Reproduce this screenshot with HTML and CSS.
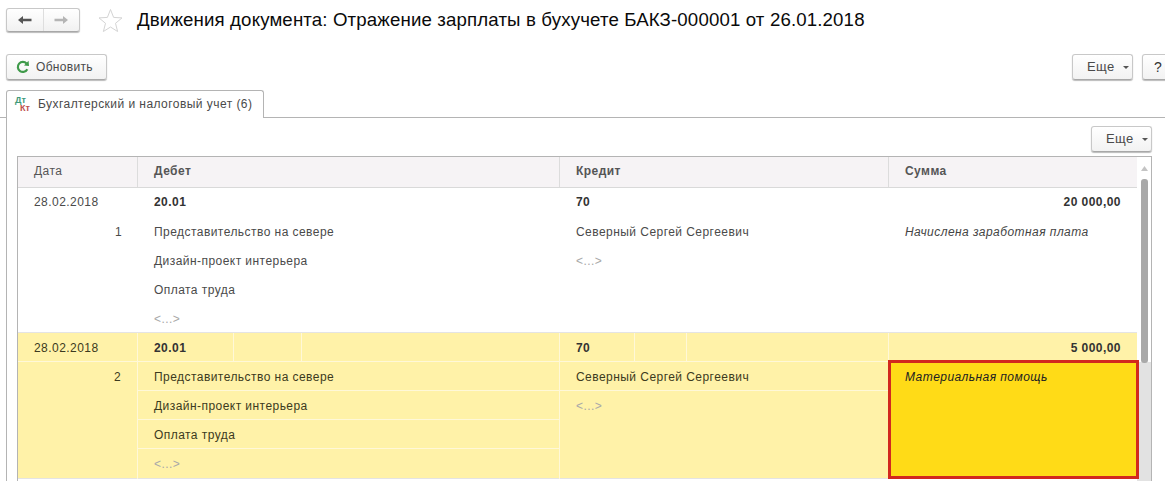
FILE: index.html
```html
<!DOCTYPE html>
<html lang="ru">
<head>
<meta charset="utf-8">
<title>Движения документа</title>
<link rel="stylesheet" href="styles.css">
</head>
<body>
<div class="page">
  <header class="top">
    <div class="nav">
      <span class="nav-btn">
        <svg width="14" height="10" viewBox="0 0 14 10"><path d="M0 5 L5 1 V3.8 H13.5 V6.2 H5 V9 Z" fill="#555"/></svg>
      </span>
      <span class="nav-btn">
        <svg width="14" height="10" viewBox="0 0 14 10"><path d="M14 5 L9 1 V3.8 H.5 V6.2 H9 V9 Z" fill="#b5b5b5"/></svg>
      </span>
    </div>
    <svg class="star" width="25" height="25" viewBox="0 0 25 25"><path d="M12.5 1.5 L15.6 9.4 L24 9.9 L17.5 15.3 L19.6 23.5 L12.5 19 L5.4 23.5 L7.5 15.3 L1 9.9 L9.4 9.4 Z" fill="#fff" stroke="#d4d4d4"/></svg>
    <h1 class="title">Движения документа: Отражение зарплаты в бухучете БАКЗ-000001 от 26.01.2018</h1>
  </header>

  <div class="cmd">
    <button class="btn refresh">
      <svg width="14" height="14" viewBox="0 0 14 14"><path d="M11.3 9.2 A5 5 0 1 1 10.6 3.6" fill="none" stroke="#3f9a4a" stroke-width="2.2"/><path d="M8 5.6 L13 6 L12.6 0.8 Z" fill="#3f9a4a"/></svg>
      <span>Обновить</span>
    </button>
    <div class="cmd-right">
      <button class="btn more">Еще <i class="caret"></i></button>
      <button class="btn help">?</button>
    </div>
  </div>

  <div class="tabs">
    <div class="tab">
      <span class="dtkt"><span class="dt">Дт</span><span class="kt">Кт</span></span>
      <span>Бухгалтерский и налоговый учет (6)</span>
    </div>
  </div>

  <section class="panel">
    <div class="panel-cmd">
      <button class="btn more">Еще <i class="caret"></i></button>
    </div>
    <div class="table">
      <div class="body">
        <div class="grid head">
          <div class="th">Дата</div>
          <div class="th b">Дебет</div>
          <div class="th b">Кредит</div>
          <div class="th b last">Сумма</div>
        </div>

        <div class="grid rec">
          <div class="date">
            <div class="ln">28.02.2018</div>
            <div class="ln num">1</div>
          </div>
          <div class="col">
            <div class="ln b dark">20.01</div>
            <div class="ln">Представительство на севере</div>
            <div class="ln">Дизайн-проект интерьера</div>
            <div class="ln">Оплата труда</div>
            <div class="ln muted">&lt;...&gt;</div>
          </div>
          <div class="col">
            <div class="ln b dark">70</div>
            <div class="ln">Северный Сергей Сергеевич</div>
            <div class="ln muted">&lt;...&gt;</div>
          </div>
          <div class="col">
            <div class="ln b dark sum">20 000,00</div>
            <div class="ln it">Начислена заработная плата</div>
          </div>
        </div>

        <div class="grid rec sel">
          <div class="date">
            <div class="ln line">28.02.2018</div>
            <div class="ln num">2</div>
          </div>
          <div class="col">
            <div class="split line deb"><span class="part p1 b dark">20.01</span><span class="part p2"></span><span class="part"></span></div>
            <div class="ln line">Представительство на севере</div>
            <div class="ln line">Дизайн-проект интерьера</div>
            <div class="ln line">Оплата труда</div>
            <div class="ln muted">&lt;...&gt;</div>
          </div>
          <div class="col">
            <div class="split line cre"><span class="part p1 b dark">70</span><span class="part p2"></span><span class="part"></span></div>
            <div class="ln line">Северный Сергей Сергеевич</div>
            <div class="ln muted">&lt;...&gt;</div>
          </div>
          <div class="col sumcol">
            <div class="ln b dark sum">5 000,00</div>
            <div class="mark it">Материальная помощь</div>
          </div>
        </div>
      </div>
      <div class="scroll">
        <svg class="arrow" width="7" height="5" viewBox="0 0 7 5"><path d="M3.5 0 L7 5 H0 Z" fill="#c4c4c4"/></svg>
        <div class="thumb"></div>
      </div>
    </div>
  </section>
</div>
</body>
</html>
```
FILE: styles.css
```css
* { box-sizing: border-box; }
html, body { margin: 0; height: 481px; overflow: hidden; background: #fff; }
body { font: 12px/14px "Liberation Sans", Arial, sans-serif; color: #4a4a4a; letter-spacing: .45px; }
.page { height: 481px; overflow: hidden; }

.top { display: flex; align-items: center; height: 24px; margin: 8px 0 0 6px; }
.nav { display: flex; width: 74px; height: 24px; border: 1px solid #c8c8c8; border-bottom-color: #a8a8a8; border-radius: 3px; background: linear-gradient(#fff, #f1f1f1); box-shadow: 0 1px 1px #bbb; }
.nav-btn { flex: 1; display: flex; align-items: center; justify-content: center; }
.nav-btn + .nav-btn { border-left: 1px solid #dedede; }
.star { margin-left: 18px; }
.title { margin: 0 0 0 14px; font-size: 18.67px; line-height: 24px; font-weight: 400; color: #0a0a0a; letter-spacing: .14px; white-space: nowrap; }

.btn { display: inline-flex; align-items: center; height: 26px; padding: 0; border: 1px solid #c8c8c8; border-bottom-color: #a8a8a8; border-radius: 3px; background: linear-gradient(#fff, #f2f2f2); box-shadow: 0 1px 1px #bbb; font: inherit; letter-spacing: inherit; color: #4a4a4a; }
.cmd { display: flex; justify-content: space-between; margin: 22px 0 0 6px; height: 26px; }
.refresh { width: 101px; padding-left: 9px; gap: 6px; letter-spacing: .3px; }
.cmd-right { display: flex; gap: 9px; margin-right: -10px; }
.more { width: 61px; padding-left: 14px; gap: 8px; font-size: 13px; }
.help { width: 33px; padding-left: 11px; font-size: 14px; color: #333; }
.caret { width: 0; height: 0; border: 3px solid transparent; border-top: 3px solid #555; border-bottom: 0; }

.tabs { display: flex; margin-top: 10px; height: 28px; padding-left: 6px; border-bottom: 1px solid #b4b4b4; }
.tab { display: flex; align-items: center; gap: 6px; width: 258px; height: 28px; padding: 0 0 2px 8px; border: 1px solid #b4b4b4; border-bottom: 0; border-radius: 3px 3px 0 0; background: #fff; }
.dtkt { display: flex; flex-direction: column; width: 17px; height: 16px; font-size: 9px; line-height: 8px; font-weight: 700; letter-spacing: 0; }
.dt { color: #3f9a7a; }
.kt { color: #c0504d; margin-left: 5px; }

.panel { margin-left: 6px; border-left: 1px solid #b4b4b4; height: 364px; padding: 8px 13px 0 10px; }
.panel-cmd { display: flex; justify-content: flex-end; height: 30px; }
.table { display: flex; height: 330px; border: 1px solid #b4b4b4; border-bottom: 0; }
.body { flex: 1; min-width: 0; }
.grid { display: grid; grid-template-columns: 120px 422px 329px 248px; }
.head { height: 31px; background: #f6f3f5; border-bottom: 1px solid #d9d9d9; }
.th { height: 30px; padding: 7px 16px 0; border-right: 1px solid #dcdcdc; color: #555; }
.th.last { border-right: 0; }
.b { font-weight: 700; }
.dark { color: #333; }
.rec { height: 145px; border-bottom: 1px solid #e4e4e4; }
.ln { height: 29px; padding: 8px 16px 0; white-space: nowrap; }
.rec:not(.sel) .ln:first-child { padding-top: 7px; }
.num { text-align: right; padding-right: 16px; }
.muted { color: #a8a8a8; }
.sum { text-align: right; }
.it { font-style: italic; color: #444; }
.sel { background: #fff2a8; height: 146px; border-bottom: 1px solid #e4e4e4; color: #3c3a20; }
.sel .date, .sel .col { border-right: 1px solid #fff8d8; }
.sel .col:last-child { border-right: 0; }
.sel .line { border-bottom: 1px solid #fff8d8; }
.split { display: flex; height: 29px; }
.part { display: block; padding: 8px 16px 0; height: 28px; border-right: 1px solid #fff8d8; }
.part:last-child { border-right: 0; }
.deb .p1 { width: 96px; }
.deb .p2 { width: 68px; }
.cre .p1 { width: 75px; }
.cre .p2 { width: 52px; }
.mark { position: relative; z-index: 1; height: 119px; margin: -2px 0 0 -1px; width: 251px; padding: 7px 14px; border: 3px solid #d2281e; background: #ffdb17; color: #222; white-space: nowrap; }
.scroll { width: 14px; flex: none; display: flex; flex-direction: column; align-items: center; padding-top: 9px; background: linear-gradient(#fff 0, #fff 205px, #e2e2e2 205px); }
.arrow { margin-bottom: 8px; }
.thumb { width: 7px; height: 184px; background: #a9a9a9; border-radius: 3px; }
```
